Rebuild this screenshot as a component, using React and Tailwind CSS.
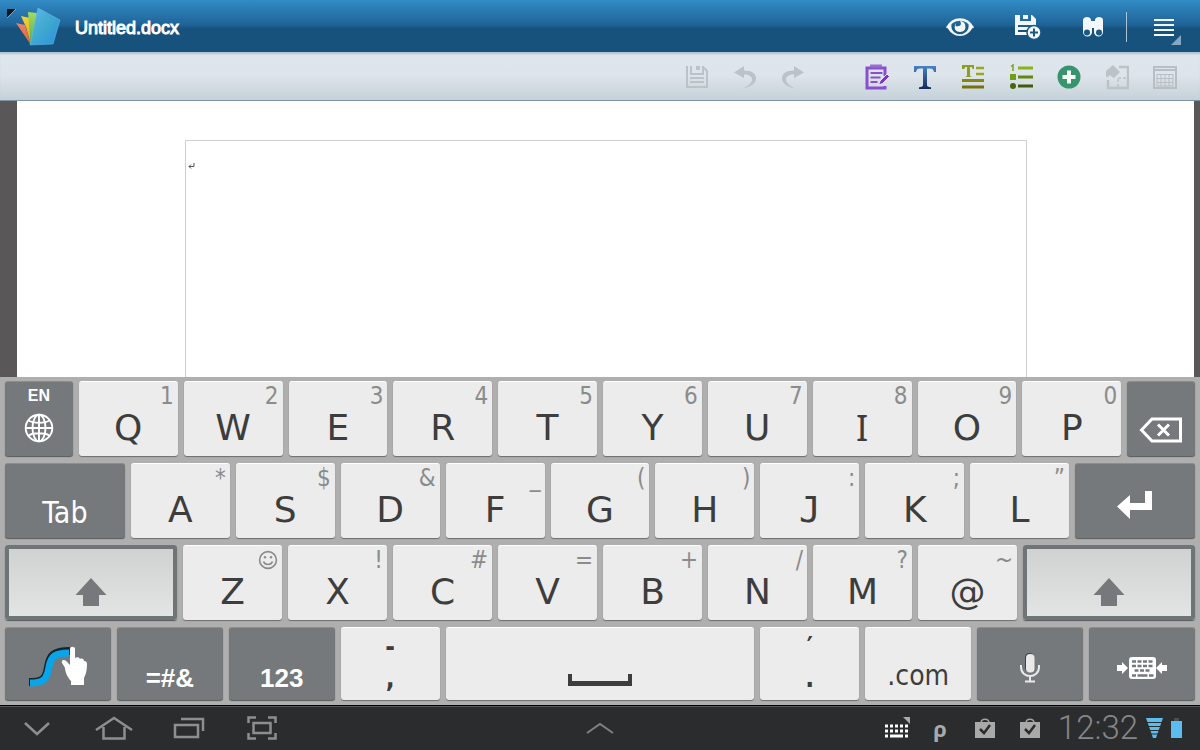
import clsx from 'clsx';

const TOP_ROW = [['Q', '1'], ['W', '2'], ['E', '3'], ['R', '4'], ['T', '5'], ['Y', '6'], ['U', '7'], ['I', '8'], ['O', '9'], ['P', '0']];
const HOME_ROW = [['A', '*'], ['S', '$'], ['D', '&'], ['F', '_'], ['G', '('], ['H', ')'], ['J', ':'], ['K', ';'], ['L', '”']];
const BOTTOM_ROW = [['Z', 'smile'], ['X', '!'], ['C', '#'], ['V', '='], ['B', '+'], ['N', '/'], ['M', '?'], ['@', '~']];

const LETTER_FONTS = {
    I: "font-['Noto_Sans',sans-serif]",
    J: "font-['DejaVu_Sans_Mono',monospace]",
};

function SmileIcon() {
    return (
        <svg width="20" height="20" viewBox="0 0 20 20" fill="none" stroke="#8b8b8b" strokeWidth="1.6">
            <circle cx="10" cy="10" r="8.4" />
            <path d="M5.5 11.5c1.5 4 7.5 4 9 0" />
            <circle cx="7" cy="7.2" r="1.2" fill="#8b8b8b" stroke="none" />
            <circle cx="13" cy="7.2" r="1.2" fill="#8b8b8b" stroke="none" />
        </svg>
    );
}

function LetterKey({ letter, hint }) {
    return (
        <button
            aria-label={letter}
            className="flex-[99] min-w-0 relative rounded-[3px] bg-[#ececec] border-t border-white shadow-[0_1px_1px_#6d6d6d] text-[#3d3d3d] flex items-end justify-center pb-2"
        >
            <span className={clsx('text-[36px] leading-10', LETTER_FONTS[letter] || "font-['DejaVu_Sans',sans-serif]")}>
                {letter}
            </span>
            <span className="absolute right-1 top-0 text-[24px] leading-7 text-[#8b8b8b]">
                {hint === 'smile' ? <span className="block pt-1"><SmileIcon /></span> : hint}
            </span>
        </button>
    );
}

function DarkKey({ label, className, children }) {
    return (
        <button
            aria-label={label}
            className={clsx(
                'min-w-0 rounded-[3px] bg-[#75797b] border-t border-[#8a8e90] shadow-[0_1px_1px_#55595a] text-white flex flex-col items-center',
                className,
            )}
        >
            {children}
        </button>
    );
}

function LightKey({ label, className, children }) {
    return (
        <button
            aria-label={label}
            className={clsx(
                'min-w-0 rounded-[3px] bg-[#ececec] border-t border-white shadow-[0_1px_1px_#6d6d6d] text-[#3d3d3d] flex flex-col items-center',
                className,
            )}
        >
            {children}
        </button>
    );
}

function ShiftKey() {
    return (
        <button
            aria-label="Shift"
            className="flex-[172] min-w-0 rounded-[3px] bg-linear-to-b from-[#cfd1d0] to-[#e4e6e5] shadow-[inset_0_0_0_4px_#6f7476,0_1px_1px_#55595a] flex items-end justify-center pb-[14px]"
        >
            <svg width="32" height="28" viewBox="0 0 32 28">
                <path d="M16 0 31.5 17H24v11H8V17H.5z" fill="#75797b" />
            </svg>
        </button>
    );
}

function AppLogo() {
    return (
        <svg width="54" height="40" viewBox="0 0 54 40">
            <defs>
                <linearGradient id="sheetBlue" x1="0" y1="0" x2="1" y2="1">
                    <stop offset="0" stopColor="#62b7ea" />
                    <stop offset="0.5" stopColor="#3fa9cf" />
                    <stop offset="1" stopColor="#2b8fe0" />
                </linearGradient>
                <linearGradient id="sheetGreen" x1="0" y1="0" x2="0" y2="1">
                    <stop offset="0" stopColor="#a6dc5c" />
                    <stop offset="1" stopColor="#4fa55c" />
                </linearGradient>
                <linearGradient id="sheetYellow" x1="0" y1="0" x2="0" y2="1">
                    <stop offset="0" stopColor="#f5d32f" />
                    <stop offset="1" stopColor="#d9a22b" />
                </linearGradient>
                <linearGradient id="sheetRed" x1="0" y1="0" x2="0" y2="1">
                    <stop offset="0" stopColor="#f0806a" />
                    <stop offset="1" stopColor="#d8682c" />
                </linearGradient>
            </defs>
            <path d="M0 3h9L0 12z" fill="#0c1720" />
            <path d="m9 3-9 9" stroke="#7ba7c6" />
            <path d="m9 17 9 2 6 20z" fill="url(#sheetRed)" />
            <path d="m14 10 9 2 1 27-5-18z" fill="url(#sheetYellow)" />
            <path d="m21 6 9 1-6 32-2-20z" fill="url(#sheetGreen)" />
            <path d="m31 2 22 12-7 24-23 1z" fill="url(#sheetBlue)" />
            <path d="m31 2 22 12-7 24-23 1z" fill="none" stroke="#63c3ee" strokeOpacity="0.5" />
        </svg>
    );
}

function EyeIcon() {
    return (
        <svg width="28" height="20" viewBox="0 0 28 20">
            <path d="M1 10C7-1.500 21-1.500 27 10" fill="none" stroke="#f3f7fa" strokeWidth="2.500" />
            <path d="M1 9c6 12 20 12 26 0l-4.500-3c1 6-3 10-8.500 10S4.500 12 5.500 6z" fill="#f3f7fa" />
            <path d="M9.500 5C7 11 10 14 14 14s7-3 5-8c-1-2-3-3-5-3 2 3 1 6-4.500 5z" fill="#f3f7fa" />
            <path d="M8 6c-2 6 2 9.500 6 9.500s8-3.500 6-9" fill="none" stroke="#1d5e8d" strokeWidth="1.500" />
        </svg>
    );
}

function SaveAsIcon() {
    return (
        <svg width="28" height="26" viewBox="0 0 28 26">
            <path
                d="M1 1h5v6h11V1h1l4 4v16H1zM4 11v2h14v-2zM4 16v2h9v-2z"
                fill="#f3f7fa"
                fillRule="evenodd"
            />
            <path d="M9 1h5v4H9z" fill="#f3f7fa" />
            <circle cx="20" cy="18.500" r="7" fill="#f3f7fa" stroke="#1a5a88" strokeWidth="1.500" />
            <path d="M20 14.500v8M16 18.500h8" stroke="#1a5a88" strokeWidth="2" />
        </svg>
    );
}

function BinocularsIcon() {
    return (
        <svg width="22" height="22" viewBox="0 0 22 22" fill="#f3f7fa">
            <path d="M1 4c0-4 8-4 8 0v1h4V4c0-4 8-4 8 0v12a4.500 4.500 0 0 1-9 0v-4h-2v4a4.500 4.500 0 0 1-9 0z" />
            <circle cx="5" cy="16.500" r="3" fill="#1a5a88" />
            <circle cx="17" cy="16.500" r="3" fill="#1a5a88" />
        </svg>
    );
}

function MenuIcon() {
    return (
        <svg width="30" height="28" viewBox="0 0 30 28">
            <path d="M1 3h20M1 8h20M1 13h20M1 18h20" stroke="#f3f7fa" strokeWidth="2" />
            <path d="M28 18v10H18z" fill="#84a8c1" />
        </svg>
    );
}

function Toolbar() {
    return (
        <div className="h-[49px] flex items-center justify-end gap-6 pt-[2px] pr-[23px] border-b border-[#8193a0] bg-linear-to-b from-[#dfe7ee] via-[#dde4ea] to-[#c5d1d9] shadow-[inset_0_3px_2px_-1px_#b3c3cf]">
            <button aria-label="Save">
                <svg width="24" height="24" viewBox="0 0 24 24" fill="none" stroke="#bcc2c7" strokeWidth="2">
                    <path d="M2 1v21h20V6l-4-4M6 1v8h12V1M12 1v4M14 1v4" />
                    <path d="M5 13h14M5 17h14" />
                </svg>
            </button>
            <button aria-label="Undo">
                <svg width="24" height="24" viewBox="0 0 24 24" fill="#bcc2c7">
                    <path d="M1 7.500 11 1v4.500c8 0 12 3 12 8 0 4-4 8-13 10 6-3 9-6 9-9 0-3-3-5-8-5V13z" />
                </svg>
            </button>
            <button aria-label="Redo">
                <svg width="24" height="24" viewBox="0 0 24 24" fill="#bcc2c7">
                    <path d="M23 7.500 13 1v4.500c-8 0-12 3-12 8 0 4 4 8 13 10-6-3-9-6-9-9 0-3 3-5 8-5V13z" />
                </svg>
            </button>
            <button aria-label="Edit mode" className="ml-9">
                <svg width="24" height="26" viewBox="0 0 24 26" fill="none" stroke="#8a4fd0">
                    <path d="M20 12V4H2v20h18v-2" strokeWidth="3" />
                    <path d="M5 2h12" stroke="#9a6cce" strokeWidth="3" />
                    <path d="M5.500 9h12M5.500 13.500h10M5.500 18h7" strokeWidth="2" />
                    <path d="m13.500 21 1.500-4 7-7 2.500 2.500-7 7z" fill="#7b35c9" stroke="#e6e4f2" />
                </svg>
            </button>
            <button aria-label="Font">
                <svg width="24" height="24" viewBox="0 0 24 24">
                    <defs>
                        <linearGradient id="fontBlue" x1="0" y1="0" x2="0" y2="1">
                            <stop offset="0" stopColor="#4a82c8" />
                            <stop offset="1" stopColor="#142a5c" />
                        </linearGradient>
                    </defs>
                    <path d="M1 1h22v6h-2c-.5-2.500-1.500-3.500-4-3.500h-3V20c0 1.500 1 2 4 2.200V24H6v-1.800c3-.2 4-.7 4-2.200V3.500H7C4.500 3.500 3.500 4.500 3 7H1z" fill="url(#fontBlue)" />
                </svg>
            </button>
            <button aria-label="Paragraph">
                <svg width="24" height="24" viewBox="0 0 24 24">
                    <path d="M1 0h12v4h-1.500c0-1.500-.5-2-2-2H9v8c0 1 .5 1.500 1.500 1.500V12h-6v-.5C5.500 11.500 6 11 6 10V2h-.5c-1.500 0-2 .5-2 2H1z" fill="#8f9c1c" />
                    <path d="M15 3h8M15 9h8" stroke="#9aa81d" strokeWidth="2.500" />
                    <path d="M1 15.500h22" stroke="#87860f" strokeWidth="3" />
                    <path d="M1 22h22" stroke="#75720a" strokeWidth="3" />
                </svg>
            </button>
            <button aria-label="Bullets and numbering">
                <svg width="24" height="26" viewBox="0 0 24 26">
                    <path d="M2 2.500 4 1v6" stroke="#7aa12b" strokeWidth="1.500" fill="none" />
                    <path d="M1 10h6v6H1z" fill="#6f9f12" />
                    <circle cx="4" cy="22" r="3" fill="#4a6410" />
                    <path d="M9 4h15" stroke="#86b51b" strokeWidth="3" />
                    <path d="M9 13h15" stroke="#5f8711" strokeWidth="3" />
                    <path d="M9 22h15" stroke="#3f5a0b" strokeWidth="3" />
                </svg>
            </button>
            <button aria-label="Insert">
                <svg width="24" height="24" viewBox="0 0 24 24">
                    <circle cx="12" cy="12" r="11.500" fill="#37946c" />
                    <path d="M12 5.500v13M5.500 12h13" stroke="#f4faf7" strokeWidth="4" />
                </svg>
            </button>
            <button aria-label="Fill and borders">
                <svg width="24" height="26" viewBox="0 0 24 26">
                    <path d="M14 3h9v21H3V16" fill="none" stroke="#bdc2c6" strokeWidth="2.500" />
                    <path d="M13 14h9M13 23V14" stroke="#bdc2c6" strokeWidth="1.500" strokeDasharray="3 2" />
                    <path d="m1 7 7-6 7 7-6 6-5-3c0 3-3 3-3 0z" fill="#bdc2c6" />
                </svg>
            </button>
            <button aria-label="Table">
                <svg width="24" height="24" viewBox="0 0 24 24" fill="none" stroke="#b8bec3">
                    <path d="M1 2h22v21H1zM1 5h22" strokeWidth="2" />
                    <path d="M4 9.500h16M4 13.500h16M4 17.500h16M4 9v12h16V9M8 9v12M12 9v12M16 9v12" />
                </svg>
            </button>
        </div>
    );
}

function GlobeIcon() {
    return (
        <svg width="30" height="30" viewBox="0 0 30 30" fill="none" stroke="#fff" strokeWidth="1.900">
            <circle cx="15" cy="15" r="13.300" />
            <ellipse cx="15" cy="15" rx="6.500" ry="13.300" />
            <path d="M15 2v26M2 15h26M4.500 7.500c5 3 16 3 21 0M4.500 22.500c5-3 16-3 21 0" />
        </svg>
    );
}

function SwypeIcon() {
    return (
        <svg width="60" height="42" viewBox="0 0 60 42">
            <path d="M1 37c13 0 17-2 19-15 2-12 6-16 22-16" fill="none" stroke="#14252d" strokeWidth="8" />
            <path d="M2 38c13 0 17-3 19-16 2-11 6-14 20-14" fill="none" stroke="#0aa5e8" strokeWidth="7" />
            <path
                d="M42 4c0-3 5-3 5 0v9c2-1 4-1 5 1 2-1 4 0 4 2 2 0 3 1 3 3 0 6-1 10-3 14v7H43v-4c-3-3-6-9-6-13-1-3-4-5-3-7s4-1 6 2l2 2z"
                fill="#fff"
            />
        </svg>
    );
}

function MicIcon() {
    return (
        <svg width="22" height="30" viewBox="0 0 22 30">
            <rect x="6" y="0" width="9" height="19" rx="4.500" fill="#3d4142" />
            <rect x="7" y="1" width="8.500" height="18.500" rx="4" fill="#e9e9e9" />
            <path d="M2 12v2c0 12 18 12 18 0v-2M11 23v5M6 28.500h10" fill="none" stroke="#e9e9e9" strokeWidth="2" />
        </svg>
    );
}

function ResizeKeyboardIcon() {
    return (
        <svg width="50" height="24" viewBox="0 0 50 24">
            <path d="M0 9h5V6l6 6-6 6v-3H0zM50 9h-5V6l-6 6 6 6v-3h5z" fill="#fff" />
            <rect x="12" y="1" width="27" height="22" rx="3" fill="#fff" />
            <path d="M15 5.500h22M15 10h22" stroke="#75797b" strokeWidth="2.500" strokeDasharray="4 1.500" />
            <path d="M17.500 14.500h16" stroke="#75797b" strokeWidth="2.500" strokeDasharray="4 1.500" />
            <path d="M15 19.500h4M20.500 19.500h10M32 19.500h4.500" stroke="#75797b" strokeWidth="2.500" />
        </svg>
    );
}

function Keyboard() {
    return (
        <div className="bg-[#afafaf] px-[5px] pt-1 pb-[5px] flex flex-col gap-[7px] font-['DejaVu_Sans_Condensed','DejaVu_Sans',sans-serif]">
            <div className="flex gap-[6px] h-[75px]">
                <DarkKey label="Language" className="flex-[68] pt-1">
                    <span className="font-['Liberation_Sans',sans-serif] font-bold text-base leading-5">EN</span>
                    <span className="mt-[7px]"><GlobeIcon /></span>
                </DarkKey>
                {TOP_ROW.map(([letter, hint]) => <LetterKey key={letter} letter={letter} hint={hint} />)}
                <DarkKey label="Backspace" className="flex-[68] justify-end pb-3">
                    <svg width="44" height="28" viewBox="0 0 44 28" fill="none" stroke="#fff">
                        <path d="M2.500 14 13 3h28.500v22H13z" strokeWidth="3" />
                        <path d="m19 8.500 11 11M30 8.500l-11 11" strokeWidth="3" />
                    </svg>
                </DarkKey>
            </div>
            <div className="flex gap-[6px] h-[75px]">
                <DarkKey label="Tab" className="flex-[120] justify-end pb-[5px]">
                    <span className="text-[30px] leading-10">Tab</span>
                </DarkKey>
                {HOME_ROW.map(([letter, hint]) => <LetterKey key={letter} letter={letter} hint={hint} />)}
                <DarkKey label="Enter" className="flex-[120] justify-center pt-2">
                    <svg width="36" height="28" viewBox="0 0 36 28">
                        <path d="M0 15.500 13 4v8h15V0h7v19H13v9z" fill="#fff" />
                    </svg>
                </DarkKey>
            </div>
            <div className="flex gap-[6px] h-[75px]">
                <ShiftKey />
                {BOTTOM_ROW.map(([letter, hint]) => <LetterKey key={letter} letter={letter} hint={hint} />)}
                <ShiftKey />
            </div>
            <div className="flex gap-[6px] h-[73px]">
                <DarkKey label="Swype" className="flex-[106] justify-center pt-1">
                    <SwypeIcon />
                </DarkKey>
                <DarkKey label="Symbols" className="flex-[106] justify-end pb-2">
                    <span className="font-['Liberation_Sans',sans-serif] font-bold text-[26px] leading-7">=#&amp;</span>
                </DarkKey>
                <DarkKey label="Numbers" className="flex-[106] justify-end pb-2">
                    <span className="font-['Liberation_Sans',sans-serif] font-bold text-[26px] leading-7">123</span>
                </DarkKey>
                <LightKey label="Comma" className="flex-[99] text-[26px] font-bold leading-[31px] pt-1">
                    <span>-</span>
                    <span>,</span>
                </LightKey>
                <LightKey label="Space" className="flex-[309] justify-end pb-[14px]">
                    <svg width="64" height="12" viewBox="0 0 64 12">
                        <path d="M0 0h4v7h56V0h4v12H0z" fill="#3d3d3d" />
                    </svg>
                </LightKey>
                <LightKey label="Period" className="flex-[99] text-[26px] font-bold leading-[31px] pt-1">
                    <span>′</span>
                    <span>.</span>
                </LightKey>
                <LightKey label=".com" className="flex-[106] justify-end pb-1">
                    <span className="text-[28px] leading-10">.com</span>
                </LightKey>
                <DarkKey label="Voice input" className="flex-[106] justify-center pt-2">
                    <MicIcon />
                </DarkKey>
                <DarkKey label="Resize keyboard" className="flex-[106] justify-center pt-2">
                    <ResizeKeyboardIcon />
                </DarkKey>
            </div>
        </div>
    );
}

function BagIcon() {
    return (
        <svg width="20" height="20" viewBox="0 0 20 20">
            <path d="M6 5c0-5 8-5 8 0" fill="none" stroke="#a3a3a3" strokeWidth="1.500" />
            <path d="M0 4h20v16H0z" fill="#a9a9a9" />
            <path d="m5 11 4 4 6-8" fill="none" stroke="#2b2c2e" strokeWidth="2.500" />
        </svg>
    );
}

function SystemBar() {
    return (
        <div className="h-[45px] bg-[#2b2c2e] border-t border-black shadow-[inset_0_1px_0_#55585a] grid grid-cols-[1fr_auto_1fr] items-center">
            <div className="flex items-center pl-6 text-[#8e8e8e]">
                <button aria-label="Back" className="mr-[45px]">
                    <svg width="26" height="16" viewBox="0 0 26 16" fill="none" stroke="currentColor" strokeWidth="2.500">
                        <path d="m1 3 12 11L25 3" />
                    </svg>
                </button>
                <button aria-label="Home" className="mr-10">
                    <svg width="38" height="24" viewBox="0 0 38 24" fill="none" stroke="currentColor" strokeWidth="2.500">
                        <path d="M1 14 19 2l18 12M8.500 11v11.500h21V11" />
                    </svg>
                </button>
                <button aria-label="Recent apps" className="mr-[42px]">
                    <svg width="32" height="22" viewBox="0 0 32 22" fill="none" stroke="currentColor" strokeWidth="2.500">
                        <path d="M2 8h23v12H2zM8 2h22v12" />
                    </svg>
                </button>
                <button aria-label="Screenshot">
                    <svg width="30" height="24" viewBox="0 0 30 24" fill="none" stroke="currentColor" strokeWidth="2.500">
                        <path d="M1.500 7V1.500H9M21 1.500h7.500V7M28.500 17v5.500H21M9 22.500H1.500V17M6.500 7h17v10h-17z" />
                    </svg>
                </button>
            </div>
            <button aria-label="Show mini apps" className="text-[#808080]">
                <svg width="28" height="12" viewBox="0 0 28 12" fill="none" stroke="currentColor" strokeWidth="2">
                    <path d="m1 11 13-9 13 9" />
                </svg>
            </button>
            <div className="flex items-center justify-end pr-[18px]">
                <svg width="26" height="22" viewBox="0 0 26 22" className="mr-[22px]">
                    <path d="M0 9h24M0 14h24" stroke="#fff" strokeWidth="3" strokeDasharray="3 2" />
                    <path d="M0 19h3M5 19h13M20 19h3" stroke="#fff" strokeWidth="3" />
                    <path d="M18 0h7v7z" fill="#aaa" />
                </svg>
                <span className="font-['Noto_Sans',sans-serif] font-bold text-[22px] leading-6 text-[#a9a9a9] mr-7">ρ</span>
                <span className="mr-[25px]"><BagIcon /></span>
                <span className="mr-[18px]"><BagIcon /></span>
                <time className="font-['Roboto',sans-serif] font-light text-[33px] leading-10 text-[#868686] mr-2">12:32</time>
                <svg width="17" height="20" viewBox="0 0 17 20" className="mr-2">
                    <path d="M0 0h17l-7 20H7z" fill="#5bbdee" />
                    <path d="M0 4.500h17M0 8.500h17M0 12.500h17M0 16h17" stroke="#2b2c2e" />
                </svg>
                <svg width="11" height="20" viewBox="0 0 11 20">
                    <path d="M3 0h5v3H3z" fill="#4b4f52" />
                    <path d="M0 3h11v17H0z" fill="#5bbdee" />
                </svg>
            </div>
        </div>
    );
}

export default function App() {
    return (
        <div className="min-h-screen flex flex-col bg-white font-['Liberation_Sans',sans-serif]">
            <header className="h-[52px] flex items-center pl-[7px] pr-[17px] bg-linear-to-b from-[#328cc6] from-0% via-[#1f6397] via-48% to-[#17527d] to-55%">
                <AppLogo />
                <h1 className="ml-3.5 pt-[3px] text-lg leading-6 text-white [-webkit-text-stroke:1px_white]">Untitled.docx</h1>
                <div className="ml-auto pt-[2px] flex items-center">
                    <button aria-label="View mode" className="pt-[2px] mr-10"><EyeIcon /></button>
                    <button aria-label="Save as" className="mr-10"><SaveAsIcon /></button>
                    <button aria-label="Find" className="mr-[22px]"><BinocularsIcon /></button>
                    <div className="w-px h-[30px] bg-[#a9c4d6] mr-[26px]" />
                    <button aria-label="Menu" className="pt-2"><MenuIcon /></button>
                </div>
            </header>
            <Toolbar />
            {/* Document */}
            <main className="flex-1 flex flex-col bg-[#595757] pl-[17px] pr-[6px]">
                <div className="flex-1 flex flex-col bg-white pl-[168px] pr-[167px] pt-[39px]">
                    <div className="flex-1 border border-b-0 border-[#cfcfcf] pl-[2px] pt-[22px]">
                        <svg width="7" height="7" viewBox="0 0 7 7" fill="none" stroke="#555">
                            <path d="M6 0v3.500H1M3 1.500l-2 2 2 2" />
                        </svg>
                    </div>
                </div>
            </main>
            <Keyboard />
            <SystemBar />
        </div>
    );
}
